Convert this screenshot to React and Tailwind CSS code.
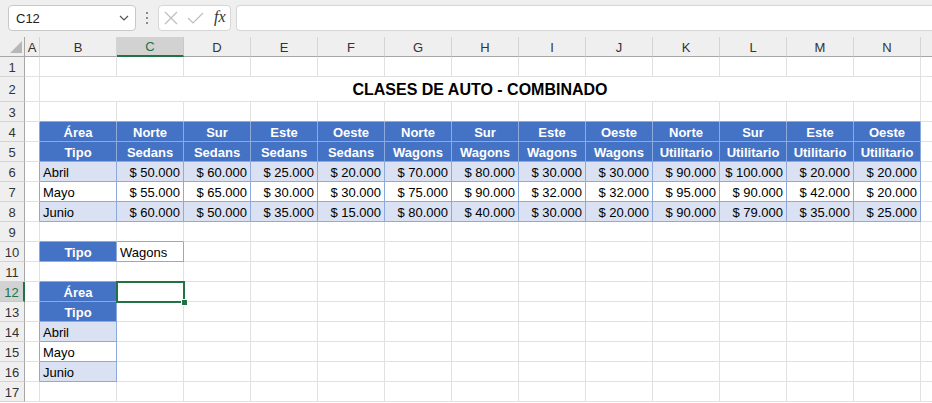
import React from "react";

const COLS = [
  { key: "A", w: 15 },
  { key: "B", w: 77 },
  { key: "C", w: 67 },
  { key: "D", w: 67 },
  { key: "E", w: 67 },
  { key: "F", w: 67 },
  { key: "G", w: 67 },
  { key: "H", w: 67 },
  { key: "I", w: 67 },
  { key: "J", w: 67 },
  { key: "K", w: 67 },
  { key: "L", w: 67 },
  { key: "M", w: 67 },
  { key: "N", w: 67 },
  { key: "", w: 20 },
];

const AREAS = ["Norte", "Sur", "Este", "Oeste"];
const TYPES = ["Sedans", "Wagons", "Utilitario"];

const DATA = [
  ["Abril", [50, 60, 25, 20, 70, 80, 30, 30, 90, 100, 20, 20]],
  ["Mayo", [55, 65, 30, 30, 75, 90, 32, 32, 95, 90, 42, 20]],
  ["Junio", [60, 50, 35, 15, 80, 40, 30, 20, 90, 79, 35, 25]],
];

const money = (n) => `$ ${n}.000`;

// which cells belong to a table, and how they look
function spec(r, ci) {
  const c = COLS[ci]?.key;
  const idx = ci - 2; // C = 0
  if ((r === 4 || r === 5) && ci >= 1 && ci <= 13) {
    if (ci === 1) return { kind: "head", text: r === 4 ? "Área" : "Tipo" };
    return {
      kind: "head",
      text: r === 4 ? AREAS[idx % 4] : TYPES[Math.floor(idx / 4)],
    };
  }
  if (r >= 6 && r <= 8 && ci >= 1 && ci <= 13) {
    const [month, vals] = DATA[r - 6];
    const kind = r === 7 ? "plain" : "fill";
    if (ci === 1) return { kind, text: month, align: "left" };
    return { kind, text: money(vals[idx]), align: "right" };
  }
  if (r === 10 && c === "B") return { kind: "head", text: "Tipo" };
  if (r === 10 && c === "C") return { kind: "plain", text: "Wagons", align: "left" };
  if (r === 12 && c === "B") return { kind: "head", text: "Área" };
  if (r === 13 && c === "B") return { kind: "head", text: "Tipo" };
  if (r >= 14 && r <= 16 && c === "B") {
    return {
      kind: r === 15 ? "plain" : "fill",
      text: DATA[r - 14][0],
      align: "left",
    };
  }
  return null;
}

const inTable = (r, ci) => spec(r, ci) !== null;

function Cell({ r, ci, w }) {
  const s = spec(r, ci);
  const selected = r === 12 && ci === 2;
  let cls = "relative shrink-0 h-full flex items-center border-r border-b ";
  if (!s) {
    cls += "bg-white border-[#e1e1e1] ";
    if (inTable(r + 1, ci)) cls += "border-b-[#8ea9db] ";
    if (inTable(r, ci + 1)) cls += "border-r-[#8ea9db] ";
  } else if (s.kind === "head") {
    cls += "bg-[#4472c4] border-[#8ea9db] text-white font-bold justify-center ";
  } else if (s.kind === "fill") {
    cls += "bg-[#d9e1f2] border-[#8ea9db] text-black ";
  } else {
    cls += "bg-white border-[#8ea9db] text-black ";
  }
  if (s?.align === "left") cls += "justify-start pl-[3px] ";
  if (s?.align === "right") cls += "justify-end pr-[3px] ";

  return (
    <div className={cls} style={{ width: w }}>
      {s && <span className="whitespace-nowrap pt-[1px]">{s.text}</span>}
      {selected && (
        <>
          <div className="absolute -left-[1px] -top-[1px] w-[69px] h-[22px] border-2 border-[#217346] z-10" />
          <div className="absolute left-[64px] top-[17px] w-[7px] h-[7px] bg-[#217346] border border-white z-20" />
        </>
      )}
    </div>
  );
}

function RowHeader({ n, h }) {
  const sel = n === 12;
  return (
    <div
      className={
        sel
          ? "w-[25px] shrink-0 bg-[#d2d2d2] border-b border-[#c8c8c8] border-r-2 border-r-[#217346] text-[#217346] flex items-center justify-center"
          : "w-[25px] shrink-0 bg-[#efefef] border-b border-[#d4d4d4] border-r border-r-[#a6a6a6] text-[#333] flex items-center justify-center"
      }
      style={{ height: h }}
    >
      <span className="pt-[1px]">{n}</span>
    </div>
  );
}

function SheetRow({ n }) {
  const h = n === 2 ? 25 : 20;
  return (
    <div className="flex" style={{ height: h }}>
      <RowHeader n={n} h={h} />
      {n === 2 ? (
        <>
          <Cell r={2} ci={0} w={15} />
          <div className="w-[881px] shrink-0 h-full bg-white border-r border-b border-[#e1e1e1] flex items-center justify-center text-black font-bold text-[16px]">
            <span className="pt-[2px]">CLASES DE AUTO - COMBINADO</span>
          </div>
          <Cell r={2} ci={14} w={20} />
        </>
      ) : (
        COLS.map((col, ci) => <Cell key={ci} r={n} ci={ci} w={col.w} />)
      )}
    </div>
  );
}

function FormulaBar() {
  return (
    <div className="h-[37px] bg-[#efefef] flex items-start pl-[8px] pt-[5px] gap-0">
      <div className="w-[128px] h-[26px] bg-white border border-[#c8c8c8] rounded-[4px] flex items-center justify-between pl-[7px] pr-[6px]">
        <span className="text-[13px] text-[#222]">C12</span>
        <svg width="10" height="6" viewBox="0 0 10 6">
          <path d="M1 1 L5 5 L9 1" fill="none" stroke="#555" strokeWidth="1.2" />
        </svg>
      </div>
      <div className="w-[22px] h-[26px] flex flex-col items-center justify-center gap-[3px]">
        <div className="w-[2px] h-[2px] bg-[#8a8a8a]" />
        <div className="w-[2px] h-[2px] bg-[#8a8a8a]" />
        <div className="w-[2px] h-[2px] bg-[#8a8a8a]" />
      </div>
      <div className="w-[73px] h-[26px] bg-white border border-[#d6d6d6] rounded-[4px] flex items-center pl-[5px]">
        <svg width="14" height="14" viewBox="0 0 14 14">
          <path d="M1 1 L13 13 M13 1 L1 13" stroke="#bdbdbd" strokeWidth="1.2" fill="none" />
        </svg>
        <svg width="17" height="12" viewBox="0 0 17 12" className="ml-[9px]">
          <path d="M1 6 L6 11 L16 1" stroke="#bdbdbd" strokeWidth="1.2" fill="none" />
        </svg>
        <span className="ml-[10px] text-[16px] italic text-[#333] font-['Liberation_Serif',serif] leading-none -mt-[2px]">
          fx
        </span>
      </div>
      <div className="ml-[5px] flex-1 h-[26px] bg-white border border-r-0 border-[#d6d6d6] rounded-l-[4px]" />
    </div>
  );
}

function ColumnHeaders() {
  return (
    <div className="flex h-[20px]">
      <div className="w-[25px] shrink-0 bg-[#efefef] border-r border-b border-[#a6a6a6] relative">
        <svg width="12" height="12" viewBox="0 0 12 12" className="absolute left-[10px] top-[4px]">
          <path d="M12 0 L12 12 L0 12 Z" fill="#b7b7b7" />
        </svg>
      </div>
      {COLS.map((col, ci) =>
        col.key === "C" ? (
          <div
            key={ci}
            className="shrink-0 bg-[#d2d2d2] border-r border-r-[#c8c8c8] border-b-2 border-b-[#217346] text-[#217346] flex items-center justify-center"
            style={{ width: col.w }}
          >
            <span className="pt-[1px]">{col.key}</span>
          </div>
        ) : (
          <div
            key={ci}
            className="shrink-0 bg-[#efefef] border-r border-r-[#d4d4d4] border-b border-b-[#a6a6a6] text-[#333] flex items-center justify-center"
            style={{ width: col.w }}
          >
            <span className="pt-[1px]">{col.key}</span>
          </div>
        )
      )}
    </div>
  );
}

export default function App() {
  const rows = Array.from({ length: 17 }, (_, i) => i + 1);
  return (
    <div className="w-[932px] h-[403px] overflow-hidden bg-white font-['Liberation_Sans',Arial,sans-serif] text-[13px] leading-none">
      <FormulaBar />
      <ColumnHeaders />
      {rows.map((n) => (
        <SheetRow key={n} n={n} />
      ))}
    </div>
  );
}
